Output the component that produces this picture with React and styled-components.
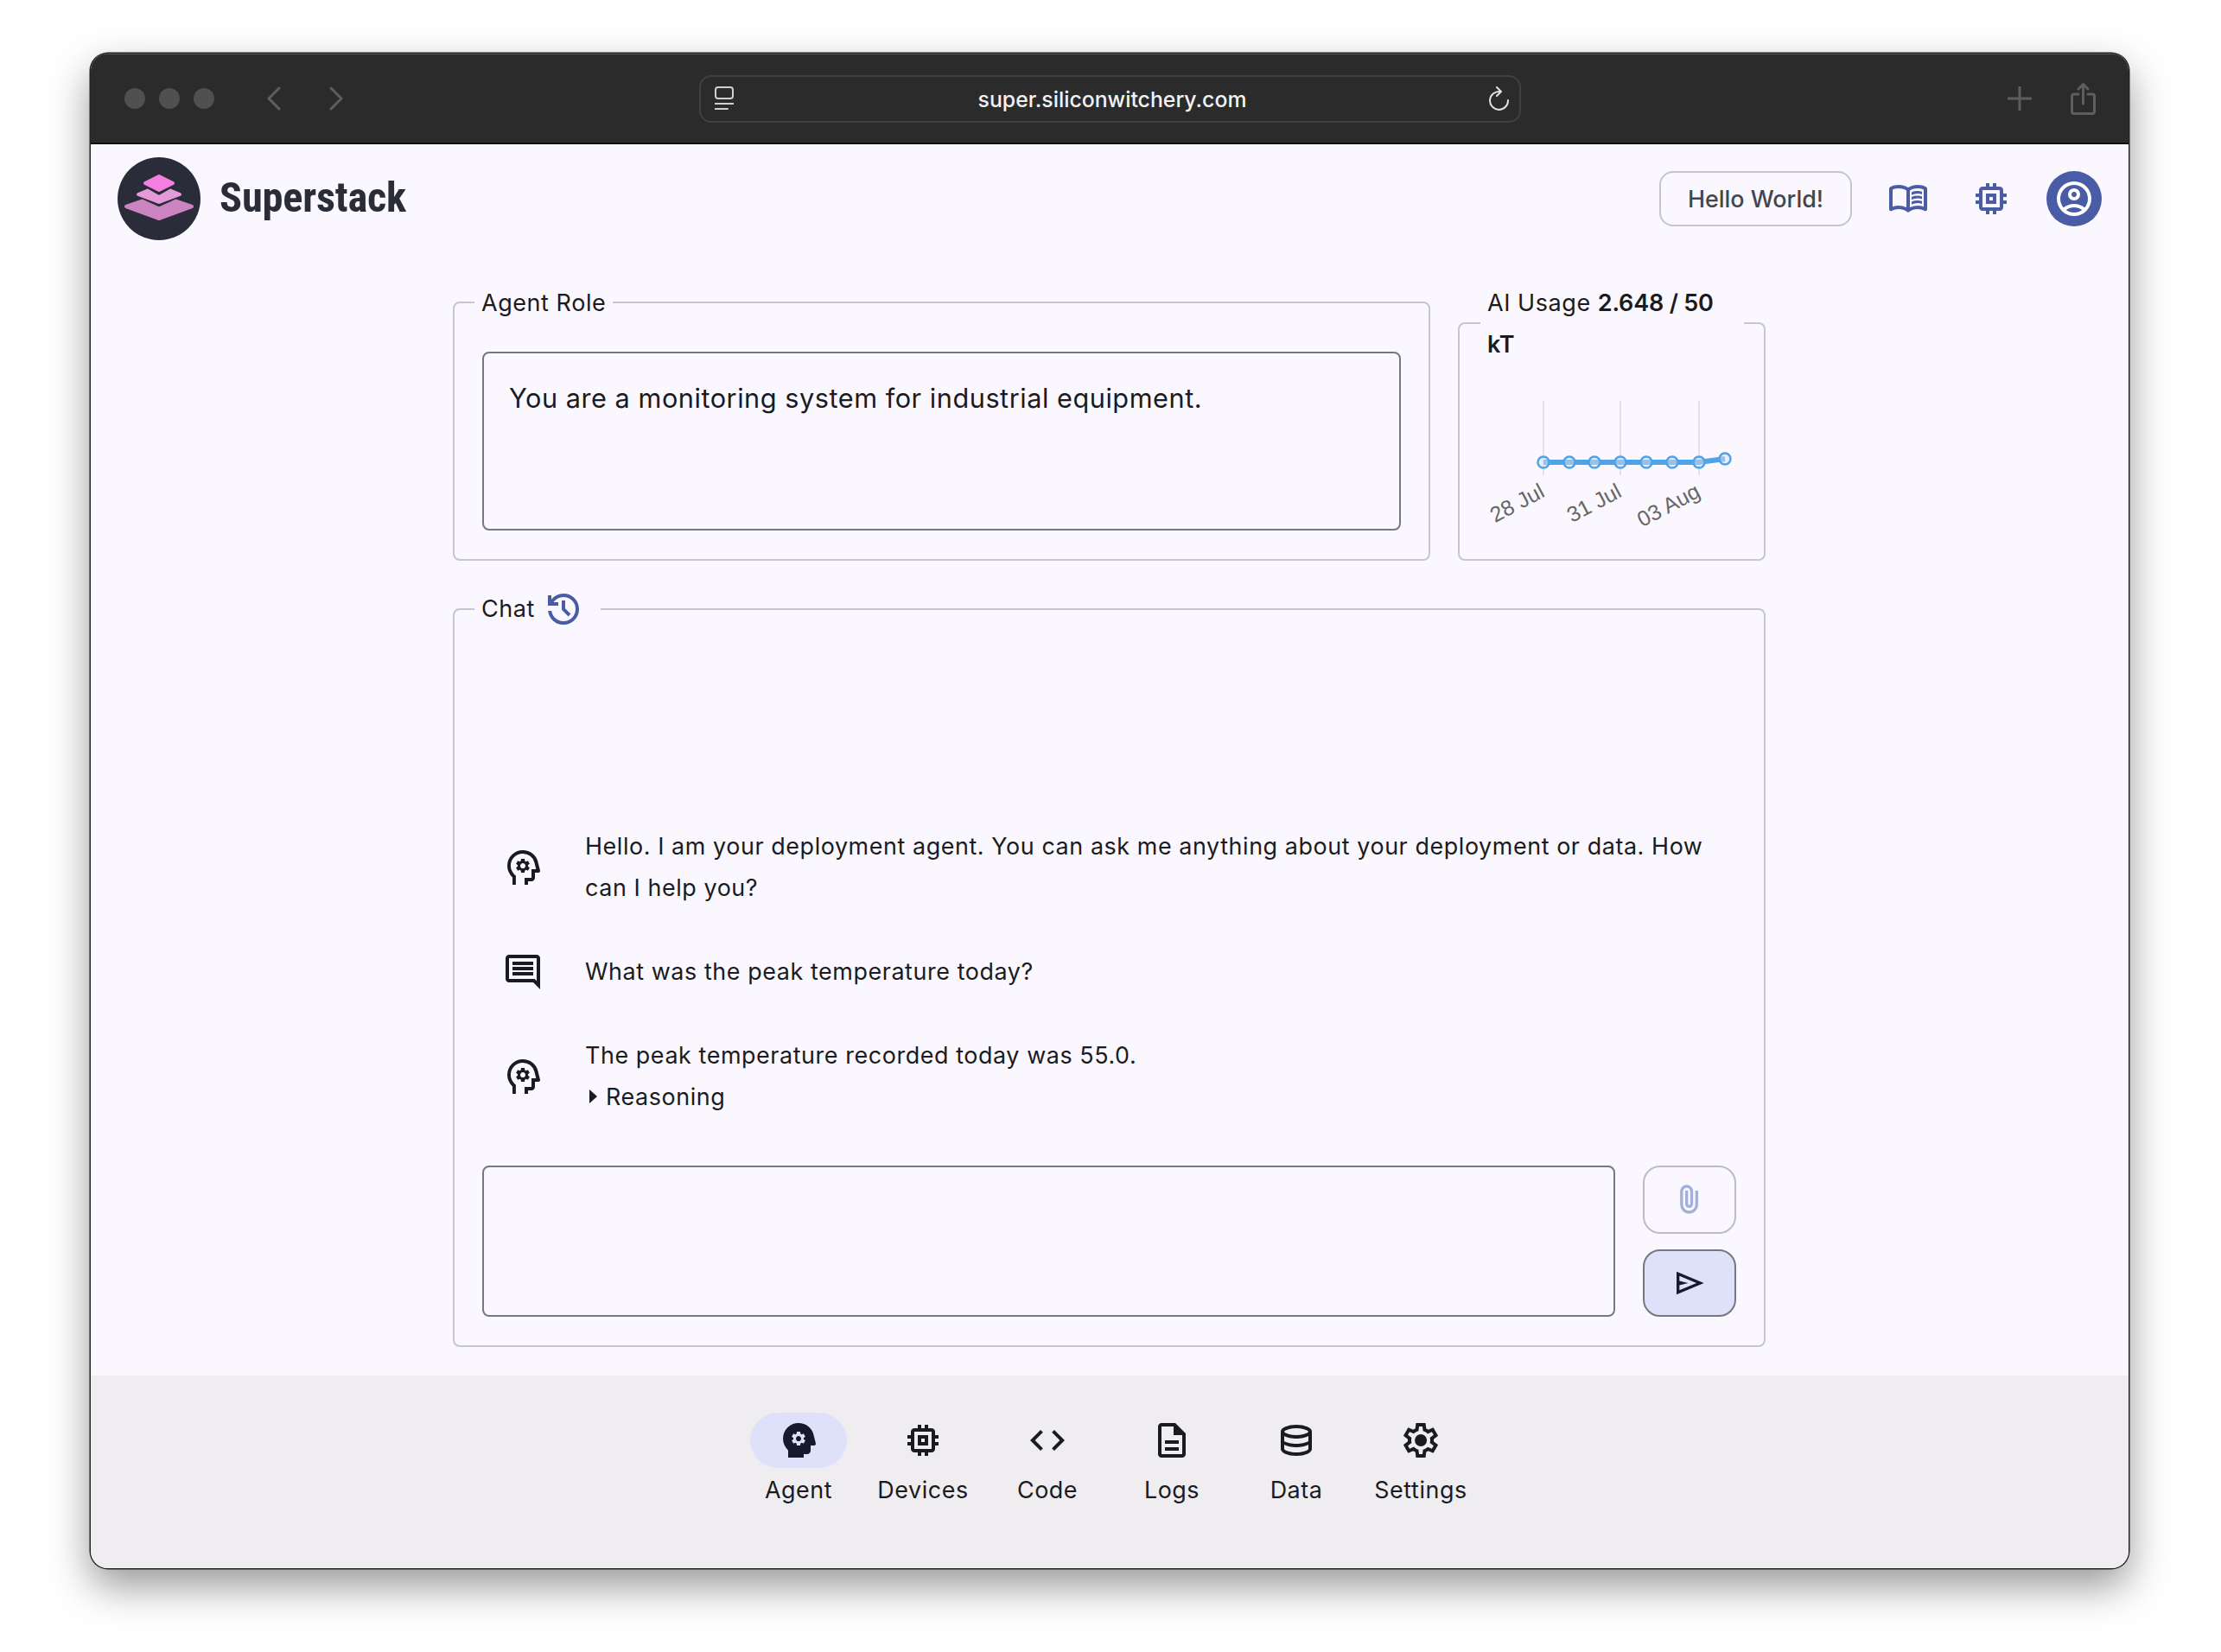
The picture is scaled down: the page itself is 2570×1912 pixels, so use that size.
import React from "react";
import styled, { createGlobalStyle } from "styled-components";

const Global = createGlobalStyle`
  html, body { margin: 0; padding: 0; background: #fff; }
  * { box-sizing: border-box; }
`;
const SANS = `Inter, "Noto Sans", sans-serif`;

const PATHS = {
  psychology: "M240-80v-172q-57-52-88.5-121.5T120-520q0-150 105-255t255-105q125 0 221.5 73.5T827-615l52 205q5 19-7 34.5T840-360h-80v120q0 33-23.5 56.5T680-160h-80v80h-80v-160h160v-200h106l-38-155q-23-91-98-148t-172-57q-116 0-198 81t-82 197q0 60 24.5 114t69.5 96l26 24v208h-80Zm254-360Zm-54 80h80l6-50q8-3 14.5-7t11.5-9l46 20 40-68-40-30q2-8 2-16t-2-16l40-30-40-68-46 20q-5-5-11.5-9t-14.5-7l-6-50h-80l-6 50q-8 3-14.5 7t-11.5 9l-46-20-40 68 40 30q-2 8-2 16t2 16l-40 30 40 68 46-20q5 5 11.5 9t14.5 7l6 50Zm40-100q-25 0-42.5-17.5T420-520q0-25 17.5-42.5T480-580q25 0 42.5 17.5T540-520q0 25-17.5 42.5T480-460Z",
  psychologyFill: "M240-80v-172q-57-52-88.5-121.5T120-520q0-150 105-255t255-105q125 0 221.5 73.5T827-615l52 205q5 19-7 34.5T840-360h-80v120q0 33-23.5 56.5T680-160h-80v80H240Zm200-280h80l6-50q8-3 14.5-7t11.5-9l46 20 40-68-40-30q2-8 2-16t-2-16l40-30-40-68-46 20q-5-5-11.5-9t-14.5-7l-6-50h-80l-6 50q-8 3-14.5 7t-11.5 9l-46-20-40 68 40 30q-2 8-2 16t2 16l-40 30 40 68 46-20q5 5 11.5 9t14.5 7l6 50Zm40-100q-25 0-42.5-17.5T420-520q0-25 17.5-42.5T480-580q25 0 42.5 17.5T540-520q0 25-17.5 42.5T480-460Z",
  memory: "M360-360v-240h240v240H360Zm80-80h80v-80h-80v80Zm-80 320v-80h-80q-33 0-56.5-23.5T200-280v-80h-80v-80h80v-80h-80v-80h80v-80q0-33 23.5-56.5T280-760h80v-80h80v80h80v-80h80v80h80q33 0 56.5 23.5T760-680v80h80v80h-80v80h80v80h-80v80q0 33-23.5 56.5T680-200h-80v80h-80v-80h-80v80h-80Zm320-160v-400H280v400h400Z",
  code: "M320-240 80-480l240-240 57 57-184 184 183 183-56 56Zm320 0-57-57 184-184-183-183 56-56 240 240-240 240Z",
  description: "M320-240h320v-80H320v80Zm0-160h320v-80H320v80ZM240-80q-33 0-56.5-23.5T160-160v-640q0-33 23.5-56.5T240-880h320l240 240v480q0 33-23.5 56.5T720-80H240Zm280-520v-200H240v640h480v-440H520Z",
  settings: "m370-80-16-128q-13-5-24.5-12T307-235l-119 50L78-375l103-78q-1-7-1-13.5v-27q0-6.5 1-13.5L78-585l110-190 119 50q11-8 23-15t24-12l16-128h220l16 128q13 5 24.5 12t22.5 15l119-50 110 190-103 78q1 7 1 13.5v27q0 6.5-2 13.5l103 78-110 190-118-50q-11 8-23 15t-24 12L590-80H370Zm70-80h79l14-106q31-8 57.5-23.5T639-327l99 41 39-68-86-65q5-14 7-29.5t2-31.5q0-16-2-31.5t-7-29.5l86-65-39-68-99 42q-22-23-48.5-38.5T533-694l-13-106h-79l-14 106q-31 8-57.5 23.5T321-633l-99-41-39 68 86 64q-5 15-7 30t-2 32q0 16 2 31t7 30l-86 65 39 68 99-42q22 23 48.5 38.5T427-266l13 106Zm42-180q58 0 99-41t41-99q0-58-41-99t-99-41q-59 0-99.5 41T342-480q0 58 40.5 99t99.5 41Z",
  history: "M480-120q-138 0-240.5-91.5T122-440h82q14 104 92.5 172T480-200q117 0 198.5-81.5T760-480q0-117-81.5-198.5T480-760q-69 0-129 32t-101 88h110v80H120v-240h80v94q51-64 124.5-99T480-840q150 0 255 105t105 255q0 150-105 255T480-120Zm112-192L440-464v-216h80v184l128 128-56 56Z",
  comment: "M240-400h480v-80H240v80Zm0-120h480v-80H240v80Zm0-120h480v-80H240v80ZM880-80 720-240H160q-33 0-56.5-23.5T80-320v-480q0-33 23.5-56.5T160-880h640q33 0 56.5 23.5T880-800v720ZM160-320h594l46 45v-525H160v480Z",
  book: "M560-564v-68q33-14 67.5-21t72.5-7q26 0 51 4t49 10v64q-24-9-48.5-13.5T700-600q-38 0-73 9.5T560-564Zm0 220v-68q33-14 67.5-21t72.5-7q26 0 51 4t49 10v64q-24-9-48.5-13.5T700-380q-38 0-73 9t-67 27Zm0-110v-68q33-14 67.5-21t72.5-7q26 0 51 4t49 10v64q-24-9-48.5-13.5T700-490q-38 0-73 9.5T560-454ZM260-320q47 0 91.5 10.5T440-278v-394q-41-24-87-36t-93-12q-36 0-71.5 7T120-692v396q35-12 69.5-18t70.5-6Zm260 42q44-21 88.5-31.5T700-320q36 0 70.5 6t69.5 18v-396q-33-14-68.5-21t-71.5-7q-47 0-93 12t-87 36v394Zm-40 118q-48-38-104-59t-116-21q-42 0-82.5 11T100-198q-21 11-40.5-1T40-234v-482q0-11 5.5-21T62-752q46-24 96-36t102-12q58 0 113.5 15T480-740q51-30 106.5-45T700-800q52 0 102 12t96 36q11 5 16.5 15t5.5 21v482q0 23-19.5 35t-40.5 1q-37-20-77.5-31T700-240q-60 0-116 21t-104 59Z",
  account: "M234-276q51-39 114-61.5T480-360q69 0 132 22.5T726-276q35-41 54.5-93T800-480q0-133-93.5-226.5T480-800q-133 0-226.5 93.5T160-480q0 59 19.5 111t54.5 93Zm246-164q-59 0-99.5-40.5T340-580q0-59 40.5-99.5T480-720q59 0 99.5 40.5T620-580q0 59-40.5 99.5T480-440Zm0 360q-83 0-156-31.5T197-197q-54-54-85.5-127T80-480q0-83 31.5-156T197-763q54-54 127-85.5T480-880q83 0 156 31.5T763-763q54 54 85.5 127T880-480q0 83-31.5 156T763-197q-54 54-127 85.5T480-80Zm0-80q53 0 100-15.5t86-44.5q-39-29-86-44.5T480-280q-53 0-100 15.5T294-220q39 29 86 44.5T480-160Zm0-360q26 0 43-17t17-43q0-26-17-43t-43-17q-26 0-43 17t-17 43q0 26 17 43t43 17Z",
  send: "M120-160v-640l760 320-760 320Zm80-120 474-200-474-200v140l240 60-240 60v140Z",
  attach: "M720-330q0 104-73 177T470-80q-104 0-177-73t-73-177v-370q0-75 52.5-127.5T400-880q75 0 127.5 52.5T580-700v350q0 46-32 78t-78 32q-46 0-78-32t-32-78v-370h80v370q0 13 8.5 21.5T470-320q13 0 21.5-8.5T500-350v-350q-1-42-29.5-71T400-800q-42 0-71 29t-29 71v370q-1 71 49 120.5T470-160q70 0 119-49.5T640-330v-390h80v390Z",
  database: "M480-120q-151 0-255.5-46.5T120-280v-400q0-66 105.5-113T480-840q149 0 254.5 47T840-680v400q0 67-104.5 113.5T480-120Zm0-479q89 0 179-25.5T760-679q-11-29-100.5-55T480-760q-91 0-178.5 25.5T200-679q14 30 101.5 55T480-599Zm0 199q42 0 81-4t74.5-11.5q35.5-7.5 67-18.5t57.5-25v-120q-26 14-57.5 25t-67 18.5Q600-528 561-524t-81 4q-42 0-82-4t-75.5-11.5Q287-543 256-554t-56-25v120q25 14 56 25t66.5 18.5Q358-408 398-404t82 4Zm0 200q46 0 93.5-7t87.5-18.5q40-11.5 67-26t32-29.5v-98q-26 14-57.5 25t-67 18.5Q600-328 561-324t-81 4q-42 0-82-4t-75.5-11.5Q287-343 256-354t-56-25v99q5 15 31.5 29t66.5 25.5q40 11.5 88 18.5t94 7Z",
};

const Glyph = ({ name, size = 48, rule }) => (
  <svg width={size} height={size} viewBox="0 -960 960 960" fill="currentColor" fillRule={rule} style={{ display: "block", flex: "none" }}>
    <path d={PATHS[name]} />
  </svg>
);

const Page = styled.div`
  width: 2570px; height: 1912px; padding: 62px 0 0 105px; overflow: hidden; background: #fff;
  font-family: ${SANS}; color: #1a1b21;
`;
const Win = styled.div`
  width: 2358px; height: 1753px; display: flex; flex-direction: column; overflow: hidden;
  border-radius: 20px; background: #faf8fe;
  box-shadow: 0 0 0 1.5px #222, 0 20px 48px rgba(0, 0, 0, 0.42);
`;
const TitleBar = styled.div`
  flex: none; height: 105px; display: flex; align-items: center; padding-left: 39px;
  background: #2b2b2b; border-top: 1px solid #5a5a5a; border-bottom: 2px solid #0c0c0c;
`;
const Lights = styled.div`display: flex; gap: 16px; margin-right: 61px;`;
const Light = styled.span`width: 24px; height: 24px; border-radius: 50%; background: #505050;`;
const NavArrows = styled.div`display: flex; gap: 56px; margin-right: 412px;`;
const ChromeSvg = styled.svg`display: block; flex: none; fill: none; stroke: ${p => p.$c || "#5e5e5e"}; stroke-width: ${p => p.$w || 3}; stroke-linecap: round; stroke-linejoin: round;`;
const Address = styled.div`
  width: 951px; height: 55px; display: flex; align-items: center; padding: 0 11px 0 16px;
  border: 2px solid #404040; border-radius: 14px; color: #f2f2f2;
`;
const Url = styled.div`flex: 1; text-align: center; font: 500 24.8px ${SANS}; padding: 2px 0 0 2px;`;
const TitleActions = styled.div`display: flex; align-items: center; gap: 45px; margin-left: 563px;`;

const Header = styled.header`
  flex: none; display: flex; align-items: center; justify-content: space-between; padding: 15px 31px 0;
`;
const Brand = styled.div`display: flex; align-items: center; gap: 22px;`;
const Title = styled.h1`
  margin: 0; font: 700 48.4px/1 "Roboto Condensed", "Liberation Sans Narrow", Roboto, sans-serif; color: #2a2c38;
  letter-spacing: -0.2px; position: relative; top: -1px;
`;
const HeaderActions = styled.div`display: flex; align-items: center; gap: 48px; color: #495ca5;`;
const HelloButton = styled.button`
  width: 223px; height: 64px; margin-right: -7px; border: 2px solid #c5c4d0; border-radius: 16px; background: transparent;
  font: 500 26.9px ${SANS}; color: #44464f; padding: 0;
`;
const Avatar = styled.div`
  width: 64px; height: 64px; margin-left: -8px; border-radius: 50%; background: #495ca5; color: #fff;
  display: flex; align-items: center; justify-content: center;
`;

const Main = styled.main`
  flex: none; width: 1519px; margin: 48px 0 33px 419px; display: flex; flex-direction: column; gap: 32px;
`;
const TopRow = styled.div`display: flex; gap: 32px;`;
const Field = styled.fieldset`
  margin: 0; min-width: 0; padding: 33px 32px 33px; border: 2px solid #c6c5d0; border-radius: 8px;
  flex: ${p => (p.$grow ? "1 1 0" : "none")}; width: ${p => p.$w || "auto"};
`;
const ChartField = styled(Field)`padding: 0;`;
const Legend = styled.legend`
  margin: 0 -9px; padding: 0 8px; font: 400 27px/48px ${SANS}; letter-spacing: 0.55px; color: #1a1b21;
  position: relative; top: 1px;
  b { font-weight: 600; letter-spacing: -0.2px; }
`;
const ChartLegend = styled(Legend)`margin: 0 23px 0 24px;`;
const ChatLegend = styled(Legend)`display: flex; align-items: center; gap: 9px; padding-right: 19px; top: 0;`;
const HistoryIcon = styled.span`display: flex; color: #495ca5;`;
const TextBox = styled.textarea`
  display: block; width: 100%; height: ${p => p.$h}px; margin: 0; resize: none; outline: none; background: transparent;
  border: 2px solid #76777f; border-radius: 8px; padding: 28px 29px;
  font: 400 30.7px/48px ${SANS}; letter-spacing: 0.52px; color: #1a1b21;
`;
const Chart = styled.svg`display: block; width: 352px; height: 224px;`;
const AxisText = styled.text`font: 25px "Liberation Sans", sans-serif; fill: #666;`;

const Messages = styled.div`
  height: 531px; margin-bottom: 56px; display: flex; flex-direction: column; justify-content: flex-end; gap: 48px;
`;
const Message = styled.div`display: flex; align-items: center; padding-left: 23px; gap: 48px;`;
const MessageIcon = styled.div`flex: none; display: flex; width: 48px; height: 48px; margin-top: 2px;`;
const MessageText = styled.div`font: 400 26.9px/48px ${SANS}; letter-spacing: 0.58px; flex: 1;`;
const Reasoning = styled.div`display: flex; align-items: center; padding-left: 5px; gap: 10px;`;
const Caret = styled.span`
  width: 0; height: 0; border-left: 9px solid #1a1b21; border-top: 8px solid transparent; border-bottom: 8px solid transparent;
`;
const InputRow = styled.div`display: flex; gap: 32px; height: 175px;`;
const ChatBox = styled(TextBox)`flex: 1; width: auto; height: 100%;`;
const ButtonStack = styled.div`flex: none; width: 108px; display: flex; flex-direction: column; gap: 18px;`;
const ActionButton = styled.button`
  flex: 1; padding: 0; display: flex; align-items: center; justify-content: center; border-radius: 20px;
  border: 2px solid ${p => (p.$primary ? "#76777f" : "#bdbcc4")};
  background: ${p => (p.$primary ? "#dee1f9" : "transparent")};
  color: ${p => (p.$primary ? "#171a2c" : "#a5b0d9")};
`;

const BottomNav = styled.nav`
  flex: 1; display: flex; justify-content: center; padding-top: 43px; background: #efedf0;
`;
const NavItem = styled.div`width: 144px; display: flex; flex-direction: column; align-items: center;`;
const NavIcon = styled.div`
  width: 112px; height: 64px; border-radius: 32px; display: flex; align-items: center; justify-content: center;
  background: ${p => (p.$active ? "#dee1f9" : "transparent")}; color: ${p => (p.$active ? "#171a2c" : "#1a1b21")};
`;
const NavLabel = styled.div`margin-top: 5px; font: 400 26.9px/40px ${SANS}; letter-spacing: 0.55px; color: #1a1b21;`;

const Logo = () => (
  <svg width="96" height="96" viewBox="0 0 96 96" style={{ display: "block" }}>
    <circle cx="48" cy="48" r="48" fill="#2a2c3a" />
    <g strokeLinejoin="round" strokeWidth="4">
      <path d="M48 44 L86 57 L48 71 L10 57 Z" fill="#cb84bf" stroke="#cb84bf" />
      <path d="M48 30 L72 43 L48 54 L24 43 Z" fill="#e49ad8" stroke="#2a2c3a" strokeWidth="6" />
      <path d="M48 33 L72 43 L48 52 L24 43 Z" fill="#e49ad8" stroke="#e49ad8" />
      <path d="M48 18 L67 30 L48 41 L29 30 Z" fill="#f47fe0" stroke="#2a2c3a" strokeWidth="5" />
      <path d="M48 22 L64 30 L48 38 L32 30 Z" fill="#f47fe0" stroke="#f47fe0" />
    </g>
  </svg>
);

const points = [97, 127, 156, 186, 216, 246, 277, 307];
const ys = [113, 113, 113, 113, 113, 113, 113, 109];

const UsageChart = () => (
  <Chart viewBox="0 0 352 224">
    {[97, 186, 277].map(x => (
      <line key={x} x1={x} x2={x} y1="42" y2="128" stroke="#e2e1e8" strokeWidth="2" />
    ))}
    <polyline points={points.map((x, i) => `${x},${ys[i]}`).join(" ")} fill="none" stroke="#4fa3e6" strokeWidth="6" />
    {points.map((x, i) => (
      <circle key={x} cx={x} cy={ys[i]} r="6.5" fill="#d9e2f0" fillOpacity="0.5" stroke="#4fa3e6" strokeWidth="2.5" />
    ))}
    {[["28 Jul", 100], ["31 Jul", 189], ["03 Aug", 280]].map(([t, x]) => (
      <AxisText key={t} x={x} y="152" textAnchor="end" transform={`rotate(-28 ${x} 152)`}>{t}</AxisText>
    ))}
  </Chart>
);

const nav = [
  ["Agent", <Glyph name="psychologyFill" rule="evenodd" />, true],
  ["Devices", <Glyph name="memory" />],
  ["Code", <Glyph name="code" />],
  ["Logs", <Glyph name="description" />],
  ["Data", <Glyph name="database" />],
  ["Settings", <Glyph name="settings" />],
];

export default function App() {
  return (
    <Page>
      <Global />
      <Win>
        <TitleBar>
          <Lights><Light /><Light /><Light /></Lights>
          <NavArrows>
            <ChromeSvg width="16" height="28" viewBox="0 0 16 28"><path d="M14 2 L2 14 L14 26" /></ChromeSvg>
            <ChromeSvg width="16" height="28" viewBox="0 0 16 28"><path d="M2 2 L14 14 L2 26" /></ChromeSvg>
          </NavArrows>
          <Address>
            <ChromeSvg $c="#d0d0d0" $w="2" width="22" height="28" viewBox="0 0 22 28">
              <rect x="1" y="1" width="20" height="13" rx="3" />
              <path d="M0 20 H22 M0 26 H15" />
            </ChromeSvg>
            <Url>super.siliconwitchery.com</Url>
            <ChromeSvg $c="#e0e0e0" $w="2" width="24" height="28" viewBox="0 0 24 28">
              <path d="M13 6 A10.5 10.5 0 1 0 22 16" />
              <path d="M9 1 L14 6 L9 11" />
            </ChromeSvg>
          </Address>
          <TitleActions>
            <ChromeSvg width="28" height="28" viewBox="0 0 28 28"><path d="M14 1 V27 M1 14 H27" /></ChromeSvg>
            <ChromeSvg width="29" height="37" viewBox="0 0 29 37">
              <path d="M9 13 H4 A2.5 2.5 0 0 0 1.5 15.5 V33 A2.5 2.5 0 0 0 4 35.5 H25 A2.5 2.5 0 0 0 27.5 33 V15.5 A2.5 2.5 0 0 0 25 13 H20" />
              <path d="M14.5 24 V2 M9 7 L14.5 1.5 L20 7" />
            </ChromeSvg>
          </TitleActions>
        </TitleBar>

        <Header>
          <Brand><Logo /><Title>Superstack</Title></Brand>
          <HeaderActions>
            <HelloButton>Hello World!</HelloButton>
            <Glyph name="book" />
            <Glyph name="memory" />
            <Avatar><Glyph name="account" /></Avatar>
          </HeaderActions>
        </Header>

        <Main>
          <TopRow>
            <Field $grow>
              <Legend>Agent Role</Legend>
              <TextBox $h={207} readOnly defaultValue="You are a monitoring system for industrial equipment." />
            </Field>
            <ChartField $w="356px">
              <ChartLegend>AI Usage <b>2.648 / 50 kT</b></ChartLegend>
              <UsageChart />
            </ChartField>
          </TopRow>

          <Field>
            <ChatLegend>Chat <HistoryIcon><Glyph name="history" /></HistoryIcon></ChatLegend>
            <Messages>
              <Message>
                <MessageIcon><Glyph name="psychology" /></MessageIcon>
                <MessageText>Hello. I am your deployment agent. You can ask me anything about your deployment or data. How can I help you?</MessageText>
              </Message>
              <Message>
                <MessageIcon><Glyph name="comment" /></MessageIcon>
                <MessageText>What was the peak temperature today?</MessageText>
              </Message>
              <Message>
                <MessageIcon><Glyph name="psychology" /></MessageIcon>
                <MessageText>
                  The peak temperature recorded today was 55.0.
                  <Reasoning><Caret />Reasoning</Reasoning>
                </MessageText>
              </Message>
            </Messages>
            <InputRow>
              <ChatBox readOnly defaultValue="" />
              <ButtonStack>
                <ActionButton><Glyph name="attach" size={40} /></ActionButton>
                <ActionButton $primary><Glyph name="send" size={40} /></ActionButton>
              </ButtonStack>
            </InputRow>
          </Field>
        </Main>

        <BottomNav>
          {nav.map(([label, icon, active]) => (
            <NavItem key={label}>
              <NavIcon $active={active}>{icon}</NavIcon>
              <NavLabel>{label}</NavLabel>
            </NavItem>
          ))}
        </BottomNav>
      </Win>
    </Page>
  );
}
